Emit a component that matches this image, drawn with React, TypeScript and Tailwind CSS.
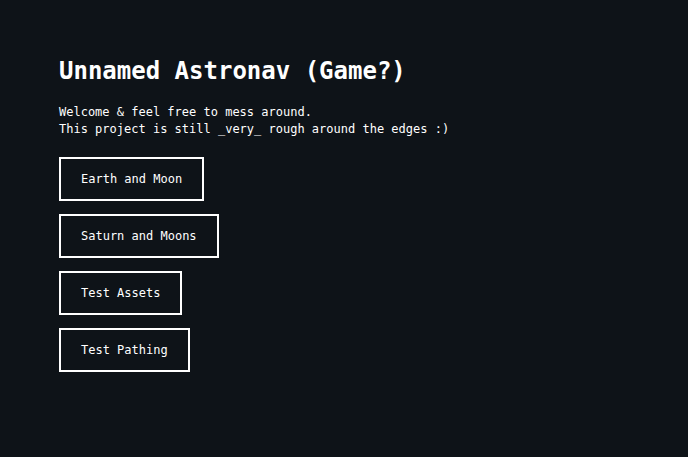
const scenes = ["Earth and Moon", "Saturn and Moons", "Test Assets", "Test Pathing"];

export default function App() {
  return (
    <div
      className="min-h-[457px] w-full bg-[#0e1318] px-[59px] pt-[53px] text-white"
      style={{ fontFamily: '"DejaVu Sans Mono", monospace' }}
    >
      <h1 className="text-[24px] font-bold leading-[36px]">Unnamed Astronav (Game?)</h1>
      <p className="mt-[15px] text-[12px] leading-[17px]">
        Welcome &amp; feel free to mess around.
        <br />
        This project is still _very_ rough around the edges :)
      </p>
      <div className="mt-[19px] flex flex-col items-start gap-[13px]">
        {scenes.map((name) => (
          <button
            key={name}
            className="border-2 border-white px-[20px] pt-[12px] pb-[11px] text-[12px] leading-[17px] text-white"
          >
            {name}
          </button>
        ))}
      </div>
    </div>
  );
}
